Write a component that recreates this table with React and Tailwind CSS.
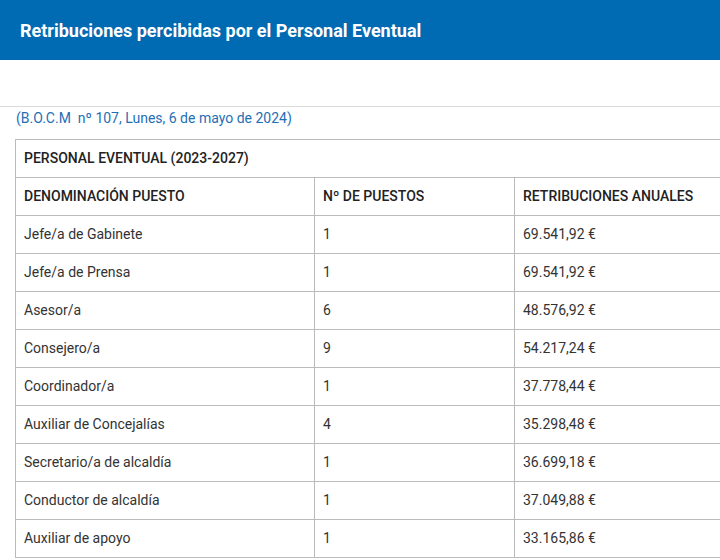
import React from "react";

const rows = [
  ["Jefe/a de Gabinete", "1", "69.541,92 €"],
  ["Jefe/a de Prensa", "1", "69.541,92 €"],
  ["Asesor/a", "6", "48.576,92 €"],
  ["Consejero/a", "9", "54.217,24 €"],
  ["Coordinador/a", "1", "37.778,44 €"],
  ["Auxiliar de Concejalías", "4", "35.298,48 €"],
  ["Secretario/a de alcaldía", "1", "36.699,18 €"],
  ["Conductor de alcaldía", "1", "37.049,88 €"],
  ["Auxiliar de apoyo", "1", "33.165,86 €"],
];

export default function App() {
  return (
    <div className="w-[720px] h-[560px] overflow-hidden bg-white" style={{ fontFamily: "Roboto, 'Liberation Sans', sans-serif" }}>
      <div className="h-[60px] bg-[#006bb3] flex items-center px-[20px]">
        <h1 className="text-white font-bold text-[18px]">Retribuciones percibidas por el Personal Eventual</h1>
      </div>
      <div className="h-[47px] border-b border-[#dcdcdc]"></div>
      <div className="h-[32px] pl-[16px] pt-[1px] text-[14px] text-[#1f6fb5] leading-[20px]">(B.O.C.M&nbsp; nº 107, Lunes, 6 de mayo de 2024)</div>
      <table className="ml-[15px] w-[820px] border-collapse text-[14px] text-[#333] table-fixed">
        <colgroup>
          <col className="w-[299px]" />
          <col className="w-[200px]" />
          <col />
        </colgroup>
        <tbody>
          <tr className="h-[38px]">
            <td colSpan={3} className="border border-[#bbb] px-[8px] font-medium text-[#222]">PERSONAL EVENTUAL (2023-2027)</td>
          </tr>
          <tr className="h-[38px]">
            <td className="border border-[#bbb] px-[8px] font-medium text-[#222]">DENOMINACIÓN PUESTO</td>
            <td className="border border-[#bbb] px-[8px] font-medium text-[#222]">Nº DE PUESTOS</td>
            <td className="border border-[#bbb] px-[8px] font-medium text-[#222]">RETRIBUCIONES ANUALES</td>
          </tr>
          {rows.map((r) => (
            <tr key={r[0]} className="h-[38px]">
              <td className="border border-[#bbb] px-[8px]">{r[0]}</td>
              <td className="border border-[#bbb] px-[8px]">{r[1]}</td>
              <td className="border border-[#bbb] px-[8px]">{r[2]}</td>
            </tr>
          ))}
        </tbody>
      </table>
    </div>
  );
}
